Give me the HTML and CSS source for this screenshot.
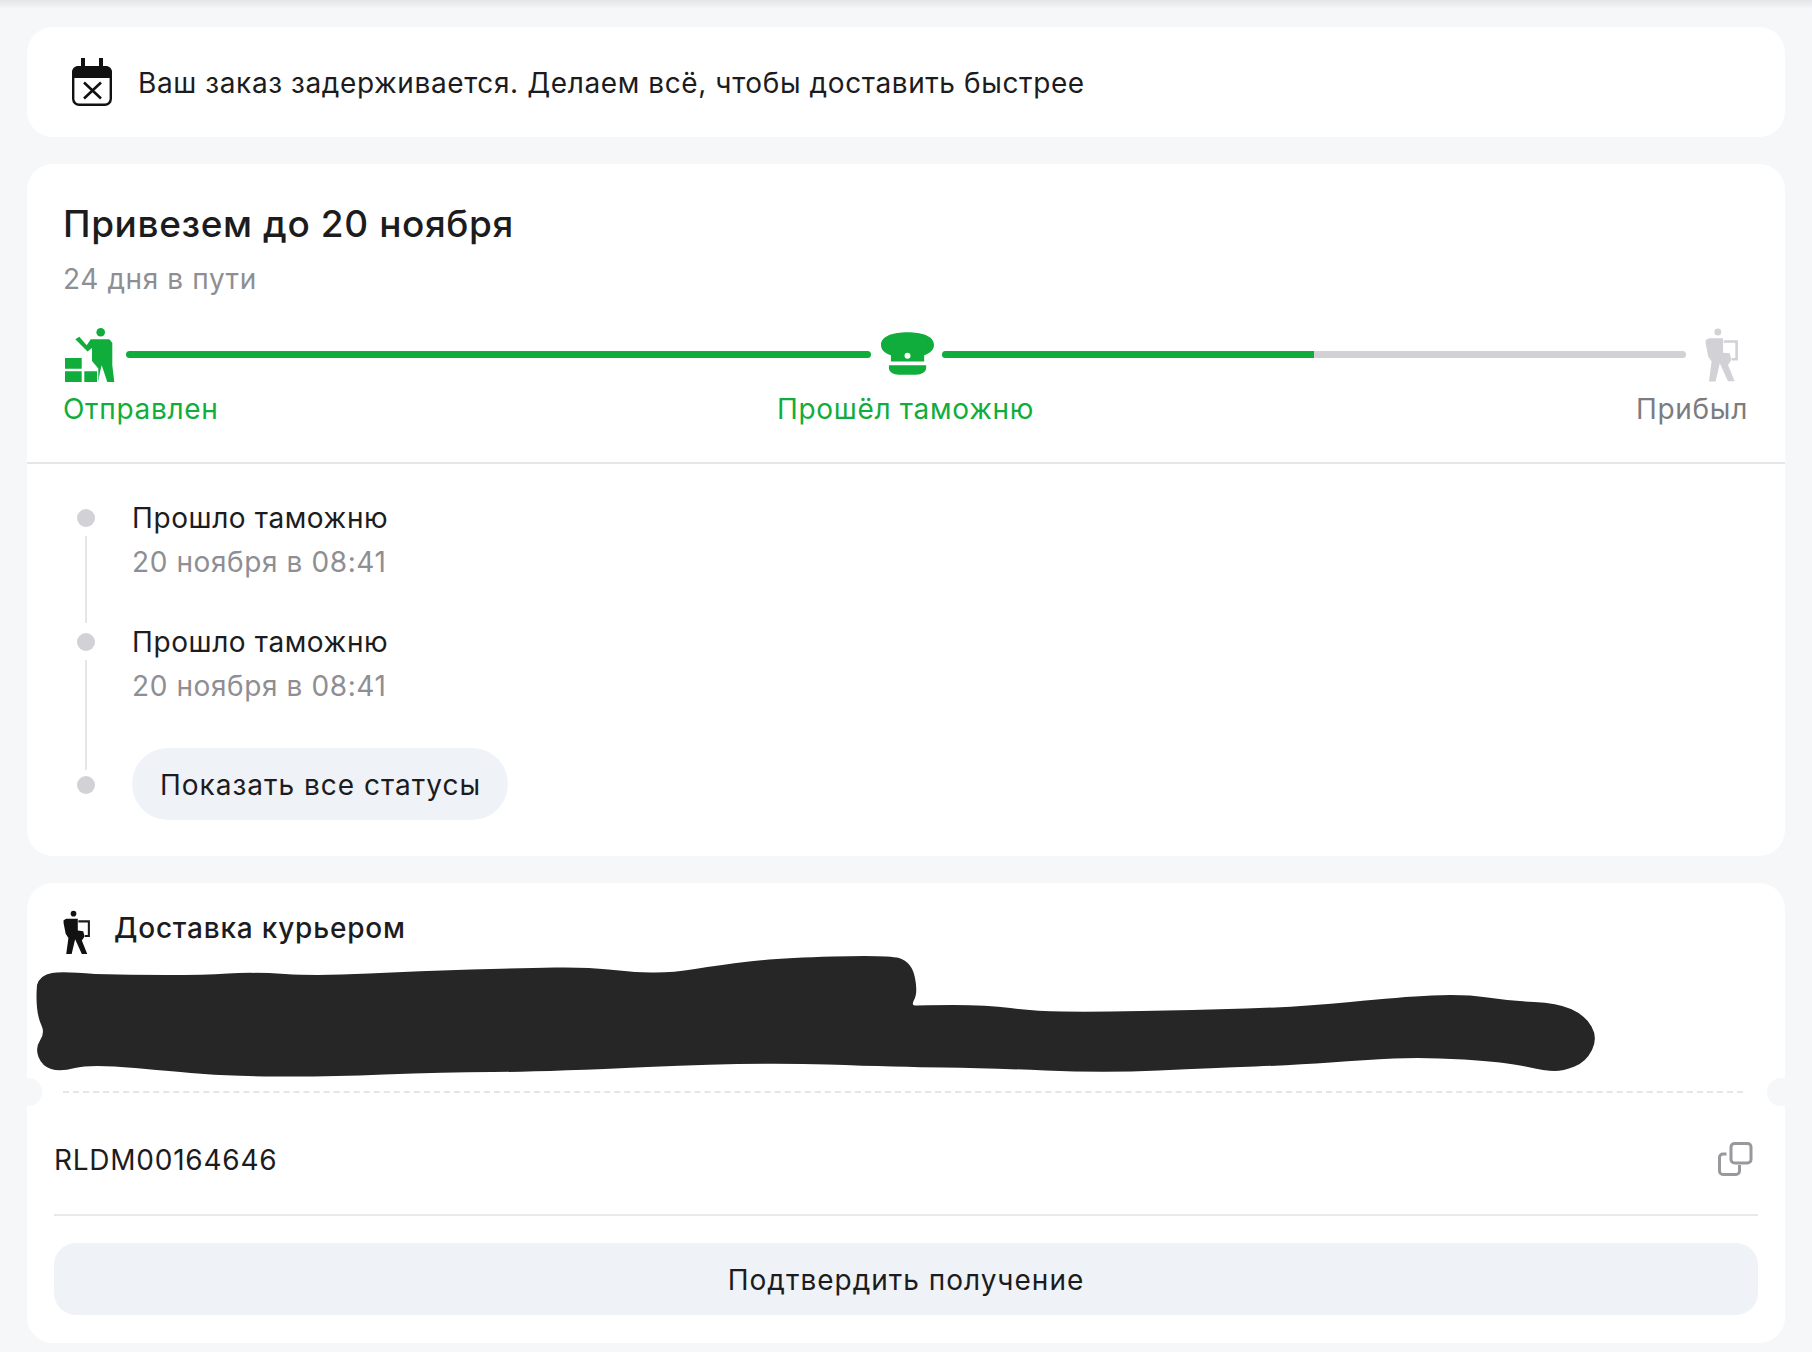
FILE: index.html
```html
<!DOCTYPE html>
<html lang="ru">
<head>
    <meta charset="UTF-8">
    <meta name="viewport" content="width=device-width, initial-scale=1.0">
    <title>Заказ</title>
    <link rel="stylesheet" href="styles.css">
</head>
<body>
    <svg class="icon-defs" width="0" height="0">
        <symbol id="courier" viewBox="0 0 33.4 53.4">
            <circle cx="13" cy="3.4" r="3.5"/>
            <path d="M.7 11.700 4 9.700h14.300v14.600l6.700.7 1.700 6.700-3.400 5 6.700 16.600h-6.700L15 35l-4.300 18.400H4l2.700-20-3.400-5L.7 15z"/>
            <path d="M19 13h13v18h-5" fill="none" stroke="currentColor" stroke-width="2.6"/>
        </symbol>
    </svg>

    <div class="top-shade"></div>
    <main class="page">
        <section class="card notice">
            <svg class="notice-icon" viewBox="0 0 40 48">
                <path d="M9 0h4v8H9zM27 0h4v8h-4z" fill="#111"/>
                <rect x="1.2" y="9.2" width="37.6" height="37.6" rx="6" fill="none" stroke="#111" stroke-width="2.4"/>
                <path d="M6 8h28a6 6 0 0 1 6 6v6H0v-6a6 6 0 0 1 6-6z" fill="#111"/>
                <path d="M12 24.500 29 40.500M29 24.500 12 40.500" stroke="#111" stroke-width="2.6" fill="none"/>
            </svg>
            <p>Ваш заказ задерживается. Делаем всё, чтобы доставить быстрее</p>
        </section>

        <section class="card tracking">
            <div class="tracking-head">
                <h1>Привезем до 20 ноября</h1>
                <p class="muted days">24 дня в пути</p>
                <div class="stages">
                    <svg class="stage-sent" viewBox="0 0 50 54">
                        <circle cx="35.700" cy="4.300" r="4.300"/>
                        <path d="M0 30h16.700v10.700H0zM0 43.300h16.700V54H0zM19.300 43.300H32V54H19.300z"/>
                        <path d="M10.300 11.300l4-2.600 7.400 8.600 4-6h18.600l3 3.400v22.600l2 16.700h-7l-5.600-16.700L35 44l-1.700 10V40.500L27 33V20l-4.500 3.500z"/>
                    </svg>
                    <div class="bar"></div>
                    <svg class="stage-customs" viewBox="0 0 53.400 42.700">
                        <path fill-rule="evenodd" d="M0 12.700C0 4 12 0 26.700 0s26.700 4 26.700 12.700c0 5.300-4.400 8.300-9.900 10.300v6.500H10V23C4 21 0 18 0 12.700zM26.700 20.700a3 3 0 1 0 0 6 3 3 0 0 0 0-6z"/>
                        <path d="M8 33.300h37.500V36c0 4-4.500 6.700-10.500 6.700H18C12 42.700 8 40 8 36z"/>
                    </svg>
                    <div class="bar bar-rest"><span class="bar-fill"></span></div>
                    <svg class="stage-arrived"><use href="#courier"/></svg>
                </div>
                <div class="stage-labels">
                    <span class="done">Отправлен</span>
                    <span class="done">Прошёл таможню</span>
                    <span class="next">Прибыл</span>
                </div>
            </div>

            <ul class="history">
                <li class="history-item">
                    <div class="rail"><i class="dot"></i><i class="rail-line"></i></div>
                    <div>
                        <div>Прошло таможню</div>
                        <div class="muted when">20 ноября в 08:41</div>
                    </div>
                </li>
                <li class="history-item">
                    <div class="rail"><i class="dot"></i><i class="rail-line rail-line-open"></i></div>
                    <div>
                        <div>Прошло таможню</div>
                        <div class="muted when">20 ноября в 08:41</div>
                    </div>
                </li>
                <li class="history-item history-more">
                    <div class="rail"><i class="rail-stub"></i><i class="dot"></i></div>
                    <button class="show-all">Показать все статусы</button>
                </li>
            </ul>
        </section>

        <section class="card delivery">
            <div class="delivery-head">
                <svg class="delivery-icon"><use href="#courier"/></svg>
                <h2>Доставка курьером</h2>
            </div>
            <svg class="scribble" viewBox="34 953 1566 126">
                <path fill="#262626" d="M37 985Q40 975 52 973Q62 971 95 974Q130 975 167 975Q204 975 228 973.500Q252 972 285 974Q318 976 369 973.500Q420 971 471 969.500Q522 968 554.500 967.500Q587 967 608.500 969.500Q630 972 650.500 972.500Q671 973 695 969Q719 965 749 961.500Q779 958 833 956.500Q887 955 899 958Q912 962 915 978Q918 993 914 1000Q911 1006 915.500 1005.500Q920 1005 953.500 1005Q987 1005 1010.500 1008Q1034 1011 1063 1011.500Q1092 1012 1141.500 1011Q1191 1010 1246 1008.500Q1301 1007 1350.500 1002Q1400 997 1432 995.500Q1464 994 1487.500 997.500Q1511 1001 1534 1002Q1557 1003 1571 1009Q1585 1015 1591.500 1026.500Q1598 1038 1592 1050Q1586 1062 1574.500 1066.500Q1563 1071 1554.500 1071Q1546 1071 1525.500 1066.500Q1505 1062 1464 1059.500Q1423 1057 1394 1058.500Q1365 1060 1330.500 1062.500Q1296 1065 1255 1066.500Q1214 1068 1159 1070.500Q1104 1073 1045.500 1070.500Q987 1068 943.500 1067.500Q900 1067 827.500 1064.500Q755 1062 647.500 1067Q540 1072 492 1072Q444 1072 384 1074.500Q324 1077 276 1076.500Q228 1076 204 1074Q180 1072 135 1068Q90 1064 75 1068Q60 1072 51 1069Q42 1066 38.500 1057Q35 1048 40 1040.500Q45 1033 41.500 1025.500Q38 1018 37 1007.500Q36 997 37 985Z"/>
            </svg>
            <div class="perforation"></div>
            <div class="track-row">
                <span>RLDM00164646</span>
                <svg class="copy-icon" viewBox="0 0 35 34">
                    <rect x="13" y="1.500" width="20" height="19.500" rx="3.500"/>
                    <path d="M8.500 12H5a3.500 3.500 0 0 0-3.500 3.500V29A3.500 3.500 0 0 0 5 32.500h13a3.500 3.500 0 0 0 3.500-3.500v-6"/>
                </svg>
            </div>
            <button class="confirm">Подтвердить получение</button>
        </section>
    </main>
</body>
</html>
```

FILE: styles.css
```css
/* styles.css */
* {
    box-sizing: border-box;
}

body {
    margin: 0;
    background-color: #f6f7f9;
    color: #1c1c1e;
    font-family: Inter, "Noto Sans", "Liberation Sans", sans-serif;
    font-size: 28px;
    line-height: 36px;
    letter-spacing: 0.6px;
}

h1, h2, p, ul {
    margin: 0;
    padding: 0;
}

button {
    border: none;
    font: inherit;
    color: inherit;
    letter-spacing: 1px;
    padding-top: 2px;
    background-color: #eff2f6;
}

.icon-defs {
    position: absolute;
}

.top-shade {
    height: 9px;
    background: linear-gradient(#e4e5e8, #f6f7f9);
}

.page {
    display: flex;
    flex-direction: column;
    gap: 27px;
    padding: 18px 27px 9px;
}

.card {
    background-color: white;
    border-radius: 26px;
}

.muted {
    color: #8e8e93;
}

/* уведомление */
.notice {
    display: flex;
    align-items: center;
    gap: 26px;
    height: 110px;
    padding-left: 45px;
}

.notice p {
    padding-top: 1px;
}

.notice-icon {
    width: 40px;
    height: 48px;
    flex: none;
}

/* статус заказа */
.tracking-head {
    padding: 38px 37px 35px 36px;
    border-bottom: 2px solid #e5e5ea;
}

h1 {
    font-size: 37px;
    line-height: 44px;
    font-weight: 500;
}

.days {
    margin-top: 15px;
}

.stages {
    display: flex;
    align-items: center;
    margin-top: 31px;
    height: 54px;
    color: #d1d1d6;
}

.stage-sent {
    width: 50px;
    height: 54px;
    flex: none;
    margin-left: 2px;
    fill: #10ad3c;
}

.bar {
    flex: 1;
    height: 7px;
    margin: 0 11px 2px;
    border-radius: 4px;
    background-color: #10ad3c;
}

.bar-rest {
    background-color: #d1d1d6;
    overflow: hidden;
}

.bar-fill {
    display: block;
    width: 50%;
    height: 100%;
    background-color: #10ad3c;
}

.stage-customs {
    width: 53px;
    height: 43px;
    flex: none;
    margin: 4px -3px 0 -1px;
    fill: #10ad3c;
    align-self: flex-start;
}

.stage-arrived {
    width: 33px;
    height: 54px;
    flex: none;
    margin: 0 10px 0 8px;
    fill: #d1d1d6;
}

.stage-labels {
    display: grid;
    grid-template-columns: 1fr auto 1fr;
    margin-top: 9px;
    letter-spacing: 0.7px;
}

.done {
    color: #10ad3c;
}

.next {
    color: #7c7c80;
    text-align: right;
}

.history {
    list-style: none;
    padding: 36px 0 36px 50px;
}

.history-item {
    display: flex;
    gap: 37px;
    height: 124px;
}

.history-more {
    height: 72px;
}

.rail {
    display: flex;
    flex-direction: column;
    align-items: center;
    width: 18px;
    flex: none;
}

.dot {
    width: 18px;
    height: 18px;
    margin-top: 9px;
    border-radius: 50%;
    background-color: #d1d1d6;
    flex: none;
}

.rail-line {
    flex: 1;
    width: 2px;
    margin: 9px 0 1px;
    background-color: #e5e5ea;
}

.rail-line-open {
    margin-bottom: 0;
}

.rail-stub {
    width: 2px;
    height: 22px;
    background-color: #e5e5ea;
}

.history-more .dot {
    margin-top: 6px;
}

.when {
    margin-top: 8px;
}

.show-all {
    height: 72px;
    padding: 2px 27px 0 28px;
    border-radius: 36px;
}

/* доставка */
.delivery {
    padding: 27px 27px 28px;
}

.delivery-head {
    display: flex;
    gap: 24px;
    padding-left: 9px;
    height: 45px;
}

.delivery-icon {
    width: 27px;
    height: 45px;
    fill: #111;
}

h2 {
    font-size: 28px;
    line-height: 36px;
    font-weight: 500;
    letter-spacing: 0.8px;
}

.scribble {
    display: block;
    width: 1566px;
    height: 126px;
    margin: -2px 0 -2px -20px;
}

.perforation {
    position: relative;
    margin: 14px 15px 0 9px;
    border-top: 2px dashed #e5e5ea;
}

.perforation::before,
.perforation::after {
    content: "";
    position: absolute;
    top: -15px;
    width: 28px;
    height: 28px;
    border-radius: 50%;
    background-color: #f6f7f9;
}

.perforation::before {
    left: -49px;
}

.perforation::after {
    right: -52px;
}

.track-row {
    display: flex;
    justify-content: space-between;
    margin-top: 49px;
    padding-bottom: 36px;
    border-bottom: 2px solid #e8e8ed;
    letter-spacing: 0.75px;
}

.copy-icon {
    width: 35px;
    height: 34px;
    margin-right: 5px;
    fill: none;
    stroke: #98989d;
    stroke-width: 3;
}

.confirm {
    display: block;
    width: 100%;
    height: 72px;
    margin-top: 27px;
    border-radius: 22px;
}
```
